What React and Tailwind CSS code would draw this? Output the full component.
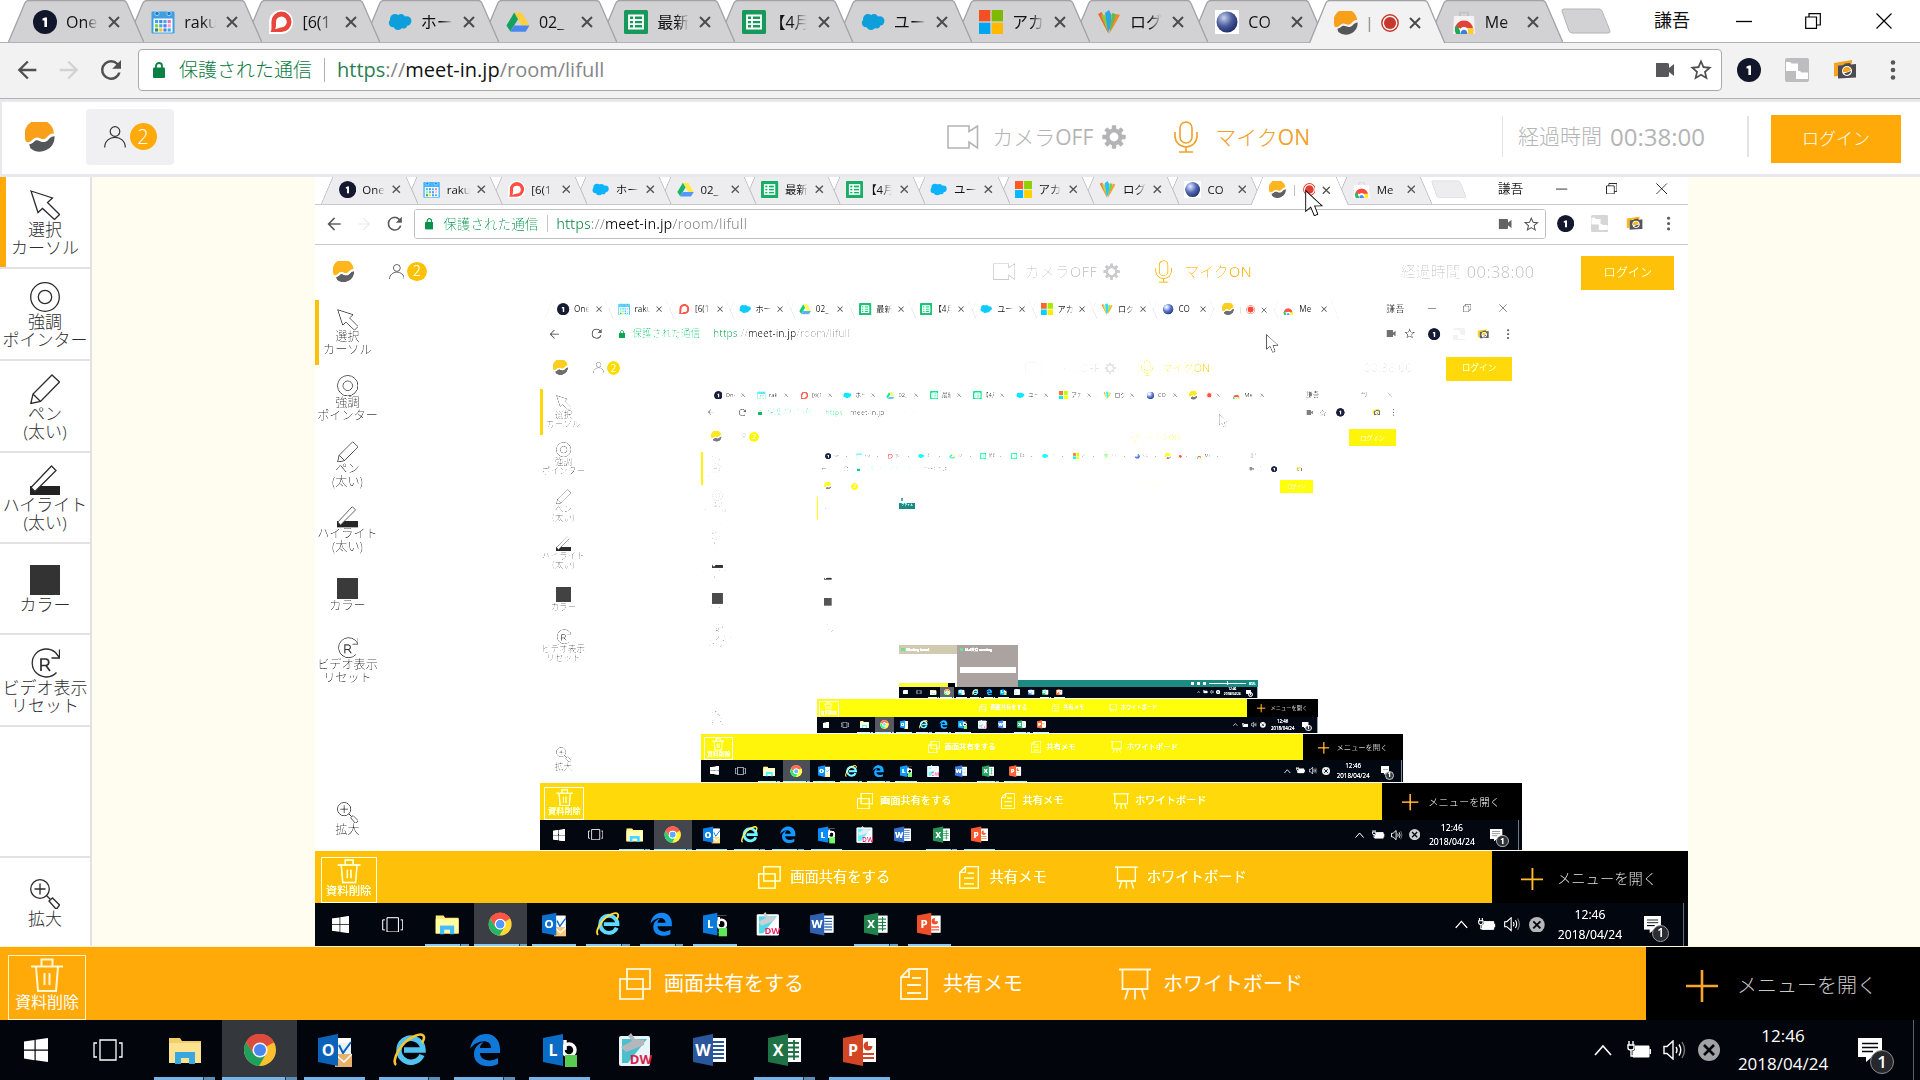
import React from "react";

/* ---------- favicons and brand marks ---------- */

function OneMark() {
  return (
    <svg viewBox="0 0 24 24" className="size-6 shrink-0">
      <circle cx="12" cy="12" r="12" fill="#12162a" />
      <path d="M9.5 8.6 L12 7.6 H14 V17 H11.4 V10.4 H9.5 Z" fill="#fff" />
    </svg>
  );
}

function CalendarMark() {
  const cells = [];
  const colors = ["#3fa7e8", "#4a86e0", "#3fa7e8", "#e46ac0", "#8fcf4a", "#3fa7e8", "#4a86e0", "#f0a0c8", "#2f8f5a", "#f0c020", "#4a86e0", "#3fa7e8"];
  for (let i = 0; i < 12; i++) {
    cells.push(<rect key={i} x={4 + (i % 4) * 4.2} y={10 + Math.floor(i / 4) * 4.2} width="3.2" height="3.2" fill={colors[i]} />);
  }
  return (
    <svg viewBox="0 0 24 24" className="size-6 shrink-0">
      <rect x="0.5" y="1.5" width="23" height="22" rx="1" fill="#3f9fe0" />
      <rect x="2.5" y="8.5" width="19" height="14" fill="#fff" />
      {cells}
      <circle cx="6" cy="3.5" r="2.2" fill="#1f78c8" stroke="#9fd4f8" />
      <circle cx="18" cy="3.5" r="2.2" fill="#1f78c8" stroke="#9fd4f8" />
    </svg>
  );
}

function ChatMark() {
  return (
    <svg viewBox="0 0 24 24" className="size-6 shrink-0">
      <path d="M12 0 A12 12 0 1 1 12 24 H0 V12 A12 12 0 0 1 12 0Z" fill="#fff" />
      <path d="M12.500 1.500 A10 10 0 1 1 12 22 H1.500 C3 20 2.400 16 2.400 12 A10.200 10.200 0 0 1 12.500 1.500Z" fill="#e8453c" />
      <path d="M12.500 6.500 A5.500 5.500 0 1 1 12 17.500 C10 17.500 9 19 6 19 C7.500 17 7 14 7 12 A5.500 5.500 0 0 1 12.500 6.500Z" fill="#fff" />
    </svg>
  );
}

function CloudMark() {
  return (
    <svg viewBox="0 0 24 24" className="size-6 shrink-0">
      <g fill="#0c9fdc">
        <circle cx="7" cy="9" r="5" />
        <circle cx="13" cy="8.5" r="4.4" />
        <circle cx="18.6" cy="11" r="4.8" />
        <circle cx="5" cy="13" r="4.2" />
        <circle cx="10" cy="15.4" r="4.6" />
        <circle cx="15.5" cy="15" r="3.6" />
      </g>
    </svg>
  );
}

function DriveMark() {
  return (
    <svg viewBox="0 0 24 24" className="size-6 shrink-0">
      <path d="M8.2 2.5 H15.8 L23.5 15.5 H15.8 Z" fill="#ffcf3f" />
      <path d="M8.2 2.5 L12 9.2 L4.4 21.5 L0.5 15.5 Z" fill="#12a15f" />
      <path d="M8.2 15.5 H23.5 L19.7 21.8 H4.4 Z" fill="#4a86f0" />
    </svg>
  );
}

function SheetMark() {
  return (
    <svg viewBox="0 0 24 24" className="size-6 shrink-0">
      <rect width="24" height="24" rx="1.5" fill="#16995a" />
      <path d="M5 5.5 H19 V18.5 H5 Z M5 10 H19 M5 14.2 H19 M10 5.5 V18.5" fill="none" stroke="#fff" strokeWidth="1.8" />
    </svg>
  );
}

function WindowsColorMark() {
  return (
    <svg viewBox="0 0 24 24" className="size-6 shrink-0">
      <rect width="11.3" height="11.3" fill="#f25022" />
      <rect x="12.7" width="11.3" height="11.3" fill="#7fba00" />
      <rect y="12.7" width="11.3" height="11.3" fill="#00a4ef" />
      <rect x="12.7" y="12.7" width="11.3" height="11.3" fill="#ffb900" />
    </svg>
  );
}

function FeatherMark() {
  return (
    <svg viewBox="0 0 24 24" className="size-6 shrink-0">
      <path d="M1 4 L4.500 2 L11 14 L11.500 24 Z" fill="#f26a2a" />
      <path d="M4 5 L8 5 L12 16 L11 22 Z" fill="#8fc640" />
      <path d="M8 3 L12 0 L14.500 5 L13.500 18 L11 22 Z" fill="#2aa8e0" />
      <path d="M15 3 L19 4 L18 12 L12.500 23 Z" fill="#68b848" />
      <path d="M19.500 4 L23 5 L18 14 L12 24 Z" fill="#f08a24" />
    </svg>
  );
}

function SphereMark() {
  return (
    <svg viewBox="0 0 24 24" className="size-6 shrink-0">
      <defs>
        <radialGradient id="sphere" cx="0.35" cy="0.3" r="0.8">
          <stop offset="0" stopColor="#c8d2ee" />
          <stop offset="0.5" stopColor="#4a5c9c" />
          <stop offset="1" stopColor="#16225c" />
        </radialGradient>
      </defs>
      <rect width="24" height="24" fill="#fff" />
      <circle cx="12" cy="12" r="10.5" fill="url(#sphere)" />
    </svg>
  );
}

function MeetInMark({ className }) {
  return (
    <svg viewBox="0 0 30 30" className={className}>
      <path d="M0.3 17.5 A14.8 14.8 0 1 1 29 11.5 C26 11 24.4 12.5 22.5 14.5 C20.5 16.8 18.5 18.2 15.5 16.6 C12 14.6 9.5 15.6 7 18.2 C5 20.2 2.5 20.6 0.8 19.6 Z" fill="#f8a01a" />
      <path d="M4.2 22.3 C6 22 7.500 21.200 9 19.800 C11 17.800 12.500 18 15 19.200 C18.500 20.800 21 20.200 23.600 17.400 C25.500 15.400 27 14.400 29.600 14.300 A14.800 14.800 0 0 1 5.400 26.200 Z" fill="#55565a" />
    </svg>
  );
}

function StoreMark() {
  return (
    <svg viewBox="0 0 24 24" className="size-6 shrink-0">
      <path d="M8 6 V2.5 H16 V6" fill="none" stroke="#c0c0c4" strokeWidth="1.6" />
      <path d="M2 6 H22 L23 24 H1 Z" fill="#f2f2f4" />
      <path d="M3 19 A9 8.5 0 0 1 21 19 L18 24 H12 L8 18 Z" fill="#e04338" />
      <path d="M3 17.5 A9 9 0 0 0 4 24 H10 L5 15.5Z" fill="#24a457" />
      <path d="M14 18 H21.5 V24 H12 Z" fill="#fccb30" />
      <circle cx="12" cy="21" r="4" fill="#fff" />
      <path d="M9 24 A3.2 3.2 0 1 1 15 24 Z" fill="#3f7de0" />
    </svg>
  );
}

/* ---------- browser chrome ---------- */

const TABS = [
  { title: "One", icon: <OneMark /> },
  { title: "raku", icon: <CalendarMark /> },
  { title: "[6(1", icon: <ChatMark /> },
  { title: "ホー", icon: <CloudMark /> },
  { title: "02_", icon: <DriveMark /> },
  { title: "最新", icon: <SheetMark /> },
  { title: "【4月", icon: <SheetMark />, tight: true },
  { title: "ユー", icon: <CloudMark /> },
  { title: "アカ", icon: <WindowsColorMark /> },
  { title: "ログ", icon: <FeatherMark /> },
  { title: "CO", icon: <SphereMark /> },
  { title: "|", icon: <MeetInMark className="size-6 shrink-0" />, active: true },
  { title: "Me", icon: <StoreMark /> },
];

function Tab({ tab, index }) {
  const fill = tab.active ? "#f2f2f2" : "#d2d2d4";
  return (
    <div
      className={"relative -ml-[18px] flex min-w-0 flex-1 items-center pt-[2px] pr-6 pl-[25px] first:ml-0 " + (tab.active ? "h-[43px]" : "h-[42px]")}
      style={{ zIndex: tab.active ? 30 : 20 - index }}
    >
      <svg viewBox="0 0 137 42" preserveAspectRatio="none" className="absolute inset-0 -z-10 h-full w-full">
        <path d="M0.5 42 L17 3 Q18 0.5 21 0.5 H116 Q118.500 0.5 119.500 3 L136.500 42" fill={fill} stroke="#a2a2a6" strokeWidth="1.3" />
      </svg>
      {tab.icon}
      {tab.active ? (
        <span className="ml-2 flex min-w-0 flex-1 items-center gap-2">
          <span className="text-[14px] leading-6 text-[#777]">{tab.title}</span>
          <svg viewBox="0 0 18 18" className="size-[18px] shrink-0">
            <circle cx="9" cy="9" r="8.200" fill="none" stroke="#c8372b" strokeWidth="1.4" />
            <circle cx="9" cy="9" r="6" fill="#c8372b" />
          </svg>
        </span>
      ) : (
        <span
          className={
            "shrink-0 overflow-hidden text-[16px] leading-6 whitespace-nowrap text-[#111] [mask-image:linear-gradient(to_right,black_60%,transparent)] " +
            (tab.tight ? "ml-[3px] w-[38px]" : "ml-[9px] w-[32px]")
          }
        >
          {tab.title}
        </span>
      )}
      <button type="button" aria-label="タブを閉じる" className="ml-auto flex size-3 shrink-0 items-center justify-center">
        <svg viewBox="0 0 12 12" className="size-3">
          <path d="M1 1 L11 11 M11 1 L1 11" stroke="#4c4c4e" strokeWidth="2" />
        </svg>
      </button>
    </div>
  );
}

function TabStrip() {
  return (
    <div className="flex h-[42px] bg-white font-normal">
      <div className="isolate z-10 ml-2 flex w-[1555px] min-w-0">
        {TABS.map((t, i) => (
          <Tab key={i} tab={t} index={i} />
        ))}
      </div>
      <button type="button" aria-label="新しいタブ" className="-ml-[2px] h-[38px] w-[50px] shrink-0 pt-[4px]">
        <svg viewBox="0 0 50 26" className="h-[26px] w-[50px]">
          <path d="M1 3 Q0.500 1 3 1 H38 Q40 1 41 3 L49 23 Q49.500 25 47 25 H11 Q9 25 8 23 Z" fill="#d2d2d4" stroke="#b4b4b8" />
        </svg>
      </button>
      <div className="ml-auto flex shrink-0 items-center pb-px text-[18px]">
        <span className="w-9 whitespace-nowrap text-[#111]">謙吾</span>
        <button type="button" aria-label="最小化" className="ml-[46px] flex w-4 justify-center">
          <svg viewBox="0 0 16 16" className="size-4"><path d="M0 8.500 H16" stroke="#000" strokeWidth="1.300" /></svg>
        </button>
        <button type="button" aria-label="元に戻す" className="ml-[53px] flex w-4 justify-center">
          <svg viewBox="0 0 16 16" className="size-4"><path d="M0.700 4 H11.500 V15.300 H0.700 Z M4 4 V0.700 H15.300 V12 H11.500" fill="none" stroke="#000" strokeWidth="1.200" /></svg>
        </button>
        <button type="button" aria-label="閉じる" className="mr-7 ml-[55px] flex w-4 justify-center">
          <svg viewBox="0 0 16 16" className="size-4"><path d="M0.500 0.500 L15.500 15.500 M15.500 0.500 L0.500 15.500" stroke="#000" strokeWidth="1.200" /></svg>
        </button>
      </div>
    </div>
  );
}

function Toolbar({ faint }) {
  return (
    <div className={"flex h-[57px] items-center border-y bg-[#f2f2f2] pb-px " + (faint ? "border-[#f2f2f2]" : "border-[#b2b2b4]")}>
      <button type="button" aria-label="戻る" className="ml-[13px] flex">
        <svg viewBox="0 0 24 24" className="size-7" fill="#505052"><path d="M20 11H7.830l5.590-5.590L12 4l-8 8 8 8 1.410-1.410L7.830 13H20v-2z" /></svg>
      </button>
      <button type="button" aria-label="進む" className="ml-[14px] flex">
        <svg viewBox="0 0 24 24" className="size-7" fill="#d2d2d4"><path d="M12 4l-1.410 1.410L16.170 11H4v2h12.170l-5.580 5.590L12 20l8-8z" /></svg>
      </button>
      <button type="button" aria-label="再読み込み" className="ml-[13px] flex">
        <svg viewBox="0 0 24 24" className="size-[30px]" fill="#505052"><path d="M17.650 6.350A7.950 7.950 0 0 0 12 4a8 8 0 1 0 7.730 10h-2.080A6 6 0 1 1 12 6c1.660 0 3.140.69 4.220 1.780L13 11h7V4z" /></svg>
      </button>
      <div className={"ml-3 flex h-[42px] min-w-0 flex-1 items-center rounded border bg-white " + (faint ? "border-white" : "border-[#a9a9ab]")}>
        <svg viewBox="0 0 12 16" className="ml-[14px] h-4 w-3"><rect y="5.500" width="12" height="10.500" rx="1" fill="#0b8043" /><path d="M3 6 V4 A3 3 0 0 1 9 4 V6" fill="none" stroke="#0b8043" strokeWidth="1.800" /></svg>
        <span className="ml-[14px] text-[19px] whitespace-nowrap text-[#0b7a40]">保護された通信</span>
        <span className={"mx-3 h-6 w-px " + (faint ? "bg-white" : "bg-[#b0b0b2]")} />
        <div role="textbox" aria-label="アドレス" className="flex-1 text-[20px] font-normal whitespace-nowrap text-[#858587]">
          <span className="text-[#2a8050]">https</span>://<span className="text-[#111]">meet-in.jp</span>/room/lifull
        </div>
        <svg viewBox="0 0 20 14" className="mr-[13px] h-[14px] w-5"><path d="M1 0 H12.500 Q14 0 14 1.500 V5 L19 1 V13 L14 9 V12.500 Q14 14 12.500 14 H1 Z" fill="#58585a" /></svg>
        <button type="button" aria-label="ブックマーク" className="mr-[7px] flex">
          <svg viewBox="0 0 24 24" className="size-[26px]" fill="#505052"><path d="M22 9.240l-7.190-.62L12 2 9.190 8.630 2 9.240l5.460 4.730L5.820 21 12 17.270 18.180 21l-1.630-7.030L22 9.240zM12 15.400l-3.760 2.270 1-4.280-3.320-2.880 4.380-.38L12 6.100l1.710 4.040 4.380.38-3.320 2.880 1 4.280L12 15.400z" /></svg>
        </button>
      </div>
      <div className="mr-[15px] ml-[15px] flex shrink-0 items-center gap-6">
        <button type="button" aria-label="1Password" className="flex"><OneMark /></button>
        <button type="button" aria-label="拡張機能" className="flex">
          <svg viewBox="0 0 24 24" className="size-6"><rect width="24" height="24" rx="2" fill="#bdbdbf" /><path d="M1 4 H5 L6.500 5.500 H13 V13 H1 Z M11 13 H15 L16.500 14.500 H23 V21 H11 Z" fill="#fff" /></svg>
        </button>
        <button type="button" aria-label="画面共有の拡張機能" className="flex">
          <svg viewBox="0 0 24 24" className="size-6">
            <path d="M1 5 L19 2 V5.500 L5 7.500 V18 L1 18.500 Z" fill="#f6a21c" />
            <path d="M5 7.500 L10 7 L12 5.500 L17 5 L18 6.500 L23 6 V19.500 L5 20.500 Z" fill="#4c4c50" />
            <circle cx="14" cy="13" r="5" fill="#fff" />
            <path d="M10 14 A4 4 0 1 1 18 12 L14 14 Z" fill="#f6a21c" />
            <path d="M11 15.500 L14 14.500 L18 13 A4 4 0 0 1 11 15.500Z" fill="#4c4c50" />
          </svg>
        </button>
        <button type="button" aria-label="メニュー" className="flex">
          <svg viewBox="0 0 24 24" className="size-6" fill="#58585a"><circle cx="12" cy="4.500" r="2.300" /><circle cx="12" cy="12" r="2.300" /><circle cx="12" cy="19.500" r="2.300" /></svg>
        </button>
      </div>
    </div>
  );
}

/* ---------- meeting header ---------- */

function Gear() {
  return (
    <svg viewBox="0 0 24 24" className="size-6">
      <circle cx="12" cy="12" r="6.400" fill="none" stroke="#b4b4b6" strokeWidth="4" />
      {[0, 45, 90, 135, 180, 225, 270, 315].map((a) => (
        <rect key={a} x="9.800" y="0.300" width="4.400" height="5" rx="0.800" fill="#b4b4b6" transform={`rotate(${a} 12 12)`} />
      ))}
    </svg>
  );
}

function MeetingHeader() {
  return (
    <header className="flex h-[78px] items-center border-t-[3px] border-b-[3px] border-l-2 border-[#e9e9ed] bg-white pb-[3px]">
      <a href="#top" aria-label="meet in" className="ml-[23px] flex"><MeetInMark className="size-[30px]" /></a>
      <button type="button" aria-label="参加者" className="ml-[31px] flex h-14 w-[88px] items-center justify-center gap-1 rounded bg-[#f0f0f2]">
        <svg viewBox="0 0 22 22" className="size-[22px]" fill="none" stroke="#333" strokeWidth="1.200"><circle cx="11" cy="5.500" r="4.800" /><path d="M0.700 21.500 C0.700 8 21.300 8 21.300 21.500" /></svg>
        <span className="flex size-[27px] items-center justify-center rounded-full bg-[#ffaa08] text-[20px] leading-5 text-white">2</span>
      </button>
      <button type="button" className="ml-auto flex items-center text-[21px] leading-7 whitespace-nowrap text-[#b4b4b6]">
        <svg viewBox="0 0 32 24" className="mr-[13px] h-6 w-8" fill="none" stroke="#b4b4b6" strokeWidth="1.600"><path d="M1 1 H22 V6.500 L30.500 1 V23 L22 17 V23 H1 Z" /></svg>
        カメラ<span className="font-normal">OFF</span>
      </button>
      <button type="button" aria-label="設定" className="ml-[9px] flex"><Gear /></button>
      <button type="button" className="ml-12 flex items-center text-[21px] leading-7 whitespace-nowrap text-[#f0a028]">
        <svg viewBox="0 0 24 32" className="mr-[17px] h-8 w-6" fill="none" stroke="#f0a028" strokeWidth="1.600"><rect x="6" y="1" width="12" height="21" rx="6" /><path d="M1 11 V15 A11 11 0 0 0 23 15 V11 M12 26 V31 M5 31 H19" /></svg>
        マイク<span className="font-normal">ON</span>
      </button>
      <div className="ml-[192px] flex h-[41px] w-[247px] items-center gap-2 border-r-2 border-l border-[#e4e4e8] pl-[15px] whitespace-nowrap text-[#b4b4b6]">
        <span className="text-[21px]">経過時間</span>
        <time className="text-[24px] font-normal">00:38:00</time>
      </div>
      <button type="button" className="mt-1 mr-[19px] ml-[22px] h-12 w-[130px] bg-[#ffaa08] text-[17px] text-white">ログイン</button>
    </header>
  );
}

/* ---------- tool sidebar ---------- */

const TOOLS = [
  {
    label: ["選択", "カーソル"],
    active: true,
    icon: <path d="M1 1 L22.500 8 L17.500 12.500 L29.500 24.500 L24.500 29.500 L12.500 18.500 L8 22.500 Z" />,
  },
  {
    label: ["強調", "ポインター"],
    icon: (<><circle cx="15" cy="15" r="14.300" /><circle cx="15" cy="15" r="6.700" /></>),
  },
  {
    label: ["ペン", "(太い)"],
    icon: <path d="M22 1 L29.500 8 L10.500 27.500 L0.800 29.500 L3 20 Z M3 20 L10.500 27.500" />,
  },
  {
    label: ["ハイライト", "(太い)"],
    icon: (<><path d="M0 30 V21 H10 L11 21 H30 V30 Z" fill="#222" stroke="none" /><path d="M21.500 1 L26 5.500 L5 26.500 L1 22.500 Z" fill="#fff" /></>),
  },
  { label: ["カラー"], icon: <rect width="30" height="30" fill="#333" stroke="none" /> },
  {
    label: ["ビデオ表示", "リセット"],
    icon: (<><path d="M26.500 24.500 A14 14 0 1 1 25.500 4.500 L29 9 M29.500 1.500 V10 H21.500" /><path d="M11 23 V11 H16 A3.300 3.300 0 0 1 16 17.500 H11 M16 17.500 L20 23" strokeWidth="1.700" /></>),
  },
];

const ZOOM_TOOL = {
  label: ["拡大"],
  icon: (<><circle cx="10" cy="10" r="9.300" /><path d="M10 4.500 V15.500 M4.500 10 H15.500 M16.500 16.500 L20.500 20.500 M19 22 L22.500 19 L29.500 26 L27 29.500 L25.500 29.500 Z" /></>),
};

function ToolButton({ tool }) {
  return (
    <button
      type="button"
      className={"flex flex-col items-center justify-center pt-[2px] text-[17px] leading-[18px] text-[#2c2c2e] " + (tool.active ? "border-l-[6px] border-[#ffaa08] pr-[6px]" : "")}
    >
      <svg viewBox="0 0 30 30" className="mb-px size-[30px]" fill="none" stroke="#2c2c2e" strokeWidth="1.300">{tool.icon}</svg>
      {tool.label.map((l) => (
        <span key={l} className="whitespace-nowrap">{l}</span>
      ))}
    </button>
  );
}

function Sidebar() {
  return (
    <nav className="grid w-[92px] shrink-0 grid-rows-[repeat(3,90px)_repeat(2,89px)_90px_1fr_88px] gap-[2px] border-r-2 border-[#e2e2e4] bg-[#e2e2e4] *:bg-white">
      {TOOLS.map((t) => (
        <ToolButton key={t.label[0]} tool={t} />
      ))}
      <div />
      <ToolButton tool={ZOOM_TOOL} />
    </nav>
  );
}

/* ---------- bottom bar ---------- */

function BottomBar() {
  return (
    <footer className="flex h-[74px] shrink-0 border-t border-[#fdf6cf] bg-[#ffaa08] text-[20px] font-normal text-white">
      <button type="button" className="mt-2 ml-2 flex h-[65px] w-[78px] flex-col items-center border border-[#fff4c8] pt-[2px]">
        <svg viewBox="0 0 34 34" className="h-[34px] w-[34px]" fill="none" stroke="#fff6d8" strokeWidth="2"><path d="M1 8.500 H33 M11.500 8.500 V1.500 H22.500 V8.500 M6 9 L8 33 H26 L28 9 M14.500 15 V27 M19.500 15 V27" /></svg>
        <span className="text-[16px] leading-5 whitespace-nowrap">資料削除</span>
      </button>
      <div className="flex flex-1 items-center">
        <button type="button" className="ml-auto flex items-center whitespace-nowrap">
          <svg viewBox="0 0 32 32" className="mr-[13px] size-8" fill="none" stroke="#fff6d8" strokeWidth="1.800"><rect x="8" y="1" width="23" height="20" /><rect x="1" y="11" width="23" height="20" /></svg>
          画面共有をする
        </button>
        <button type="button" className="ml-[96px] flex items-center whitespace-nowrap">
          <svg viewBox="0 0 28 32" className="mr-[15px] h-8 w-7" fill="none" stroke="#fff6d8" strokeWidth="1.800"><path d="M9 1 H27 V31 H1 V9 Z M9 1 V9 H1 M12 10 H21 M7 17 H21 M7 25 H21" /></svg>
          共有メモ
        </button>
        <button type="button" className="mr-[343px] ml-[96px] flex items-center whitespace-nowrap">
          <svg viewBox="0 0 32 32" className="mr-[12px] size-8" fill="none" stroke="#fff6d8" strokeWidth="1.800"><path d="M0 1.500 H32 M3.500 1.500 V21 H28.500 V1.500 M9 22 L6 31.500 M16 22 V31.500 M23 22 L26 31.500" /></svg>
          ホワイトボード
        </button>
      </div>
      <button type="button" className="flex w-[274px] items-center bg-black pt-[5px] pl-[40px] font-light whitespace-nowrap text-[#c8c8c8]">
        <svg viewBox="0 0 32 32" className="mr-[19px] size-8"><path d="M0 16 H32 M16 0 V32" stroke="#f8a62a" strokeWidth="2.600" /></svg>
        メニューを開く
      </button>
    </footer>
  );
}

/* ---------- windows taskbar ---------- */

function OfficeMark({ letter, color, children }) {
  return (
    <svg viewBox="0 0 34 34" className="size-[34px]">
      <rect x="14" y="5" width="19" height="24" fill="#fff" />
      {children}
      <path d="M0 5 L20 1 V33 L0 29 Z" fill={color} />
      <text x="10" y="23" textAnchor="middle" fontSize="16" fontWeight="700" fill="#fff" fontFamily="Open Sans, sans-serif">{letter}</text>
    </svg>
  );
}

function ChromeMark() {
  return (
    <svg viewBox="0 0 34 34" className="size-[34px]">
      <circle cx="17" cy="17" r="16" fill="#fbc02d" />
      <path d="M17 17 L3.100 9 A16 16 0 0 1 31 9.200 Z" fill="#dd4b3e" />
      <path d="M3.100 9 A16 16 0 0 0 16 33 L23 21 L10 20 Z" fill="#1fa15d" />
      <path d="M17 9.200 H31 A16 16 0 0 0 3.100 9 L10 20.500 Z" fill="#dd4b3e" />
      <circle cx="17" cy="17" r="7.600" fill="#f4f4f4" />
      <circle cx="17" cy="17" r="6" fill="#4a86f0" />
    </svg>
  );
}

const APPS = [
  { name: "スタート", icon: <svg viewBox="0 0 24 24" className="size-6" fill="#fff"><path d="M0 3.500 L10.500 2 V11.500 H0 Z M11.700 1.800 L24 0 V11.500 H11.700 Z M0 12.700 H10.500 V22.200 L0 20.600 Z M11.700 12.700 H24 V24 L11.700 22.300 Z" /></svg> },
  { name: "タスクビュー", icon: <svg viewBox="0 0 30 22" className="h-[22px] w-[30px]" fill="none" stroke="#fff" strokeWidth="1.300"><path d="M7 1 H23 V21 H7 Z M4 4 H1 V18 H4 M26 4 H29 V18 H26" /></svg> },
  { name: "エクスプローラー", open: 2, icon: <svg viewBox="0 0 34 34" className="size-[34px]"><path d="M1 5 H12 L14 8 H33 V30 H1 Z" fill="#f3cf6a" /><path d="M1 10 H33 V30 H1 Z" fill="#fde391" /><path d="M7 31 V19 H27 V31 H21 V25 H13 V31 Z" fill="#3aa8e0" /></svg> },
  { name: "Chrome", open: 2, active: true, icon: <ChromeMark /> },
  { name: "Outlook", open: 1, icon: <OfficeMark letter="O" color="#0a63b8"><path d="M16 10 H33 V26 H16 Z" fill="#e8f2fc" /><path d="M21 12 L25 20 L33 9" fill="none" stroke="#0a63b8" strokeWidth="2" /><path d="M17 21 H34 V34 H17 Z" fill="#e8b068" /><path d="M17 21 L26 29 L34 21" fill="none" stroke="#fff" strokeWidth="1.500" /></OfficeMark> },
  { name: "Internet Explorer", open: 2, icon: <svg viewBox="0 0 34 34" className="size-[34px]"><path d="M29 22 A12 12 0 1 1 30 17 H11" fill="none" stroke="#52c3f0" strokeWidth="5.500" /><path d="M3 32 C-2 28 8 8 22 3 C31 -1 33 4 29 10" fill="none" stroke="#f8c430" strokeWidth="2.600" /></svg> },
  { name: "Edge", open: 2, icon: <svg viewBox="0 0 34 34" className="size-[34px]"><path d="M2 16 C4 5 11 1 18 1 C28 1 32 9 32 16 V20 H12 C12 27 22 30 30 25 V31 C20 36 6 33 6 21 C6 14 11 10 16 9 C13 11 12 13 12 15 H23 C23 5 8 7 2 16 Z" fill="#0f78d8" /></svg> },
  { name: "Lync", open: 1, icon: <OfficeMark letter="L" color="#0a6cc4"><rect x="14" y="5" width="20" height="24" fill="#03050a" /><path d="M22 7 V17" stroke="#fff" strokeWidth="3.500" /><circle cx="26" cy="17" r="6" fill="none" stroke="#fff" strokeWidth="3.500" /><rect x="22" y="22" width="12" height="12" fill="#56cc50" /></OfficeMark> },
  { name: "DocuWorks", icon: <svg viewBox="0 0 34 34" className="size-[34px]"><rect x="1" y="3" width="31" height="30" rx="2" fill="#e8f4f6" /><path d="M4 6 H29 L10 30 H4 Z" fill="#4cbfcf" /><path d="M3 14 L14 8 L10 3 L13 0 L17 6 L26 7 V12 L8 19 Z" fill="#b4b8bc" /><text x="34" y="31" textAnchor="end" fontSize="13" fontWeight="700" fill="#d81e50" fontFamily="Open Sans, sans-serif">DW</text></svg> },
  { name: "Word", icon: <OfficeMark letter="W" color="#2a569c"><path d="M20 9 H31 M20 13 H31 M20 17 H31 M20 21 H31 M20 25 H31" stroke="#2a569c" strokeWidth="1.800" /></OfficeMark> },
  { name: "Excel", open: 2, icon: <OfficeMark letter="X" color="#1f7245"><path d="M20 10 H31 M20 14.500 H31 M20 19 H31 M20 23.500 H31 M26 7 V27" stroke="#1f7245" strokeWidth="1.800" /></OfficeMark> },
  { name: "PowerPoint", open: 1, icon: <OfficeMark letter="P" color="#d24625"><path d="M20 21 H31 M20 25 H31" stroke="#d24625" strokeWidth="1.800" /><circle cx="25" cy="13" r="4.500" fill="#d24625" /><path d="M25 13 V8 A5 5 0 0 1 30 13 Z" fill="#fff" /></OfficeMark> },
];

function Taskbar() {
  return (
    <div className="flex h-[60px] shrink-0 bg-[#02050c] text-[17px] font-normal text-white">
      <div className="flex">
        {APPS.map((a, i) => (
          <button
            key={a.name}
            type="button"
            aria-label={a.name}
            className={"relative flex items-center justify-center " + (i < 2 ? "w-[72px] " : "w-[75px] ") + (i === 2 ? "ml-[3px] " : "") + (a.active ? "bg-[#34373c]" : "")}
          >
            {a.icon}
            {a.open && (
              <span className={"absolute bottom-0 flex h-[3px] bg-[#76b4e8] " + (a.active ? "inset-x-0" : "inset-x-[7px]")}>
                {a.open === 2 && <span className="ml-auto w-[12px] border-l border-[#1c3048] bg-[#5c8fb8]" />}
              </span>
            )}
          </button>
        ))}
      </div>
      <div className="ml-auto flex items-center">
        <svg viewBox="0 0 18 12" className="h-3 w-[18px]"><path d="M1 11 L9 2 L17 11" fill="none" stroke="#fff" strokeWidth="1.600" /></svg>
        <svg viewBox="0 0 24 18" className="ml-[15px] h-[18px] w-6"><path d="M6 5 H22 V16 H6 Z" fill="#fff" stroke="#fff" /><path d="M22.500 8 H24 V13 H22.500 Z" fill="#fff" /><path d="M0 3 H8 V8 Q8 10 4 10 Q0 10 0 8 Z" fill="#02050c" /><path d="M1 4 H7 V7 Q7 9 4 9 Q1 9 1 7 Z M2 4 V0 M6 4 V0 M4 9 V15 H7" fill="none" stroke="#fff" strokeWidth="1.400" /></svg>
        <svg viewBox="0 0 24 20" className="ml-3 h-5 w-6" fill="none" stroke="#fff" strokeWidth="1.400"><path d="M1 6.500 H4 L10 1 V19 L4 13.500 H1 Z M13 7 Q15 10 13 13 M16 4.500 Q19.500 10 16 15.500" /><path d="M19 2 Q24 10 19 18" stroke="#777" /></svg>
        <svg viewBox="0 0 22 22" className="ml-[11px] size-[22px]"><circle cx="11" cy="11" r="11" fill="#a0a2a4" /><path d="M6 6 L16 16 M16 6 L6 16" stroke="#02050c" strokeWidth="2.600" /></svg>
        <time className="ml-[14px] flex w-[98px] flex-col items-center leading-7 whitespace-nowrap"><span>12:46</span><span>2018/04/24</span></time>
        <div className="relative ml-[26px] size-6">
          <svg viewBox="0 0 24 24" className="size-6"><path d="M0 0 H24 V19 H14 L8 24 V19 H0 Z" fill="#fff" /><path d="M4 5.500 H20 M4 9.500 H20 M4 13.500 H15" stroke="#02050c" strokeWidth="1.500" /></svg>
          <span className="absolute top-3 left-3 flex size-6 items-center justify-center rounded-full border border-[#8a8c90] bg-[#26282c] text-[17px] leading-5 font-semibold">1</span>
        </div>
        <span className="mr-[6px] ml-[31px] h-[60px] w-px bg-[#5c6068]" />
      </div>
    </div>
  );
}

/* ---------- the shared screen ---------- */

function Pointer() {
  return (
    <svg viewBox="0 0 25 37" className="h-[37px] w-[25px]">
      <path d="M1 1 V30 L8 24 L13 36 L18 34 L13.500 22.500 L23.500 22 Z" fill="#fff" stroke="#111" strokeWidth="1.500" />
    </svg>
  );
}

function SpreadsheetScreen() {
  return (
    <div className="flex h-full flex-col bg-white">
      <div className="mt-3 ml-3 h-4 w-3 bg-[#2a6058]" />
      <div className="mt-2 flex h-8 w-[88px] items-center justify-center bg-[#0f4b47] text-[16px] whitespace-nowrap text-white">ファイル</div>
      <div className="mt-auto flex items-end">
        <div className="h-[222px] w-[312px] bg-white">
          <div className="flex h-[48px] items-center gap-2 bg-[#706e60] px-3 text-[18px] font-normal whitespace-nowrap text-white">
            <span className="size-5 bg-[#3a7a50]" />Meeting board
          </div>
          <div className="mt-[154px] flex h-5 w-[300px] bg-[#8a8a1c]"><span className="ml-auto w-9 bg-black" /></div>
        </div>
        <div className="flex h-[222px] w-[326px] flex-col bg-[#5c5857]">
          <div className="flex h-[48px] items-center gap-2 px-3 text-[18px] font-normal whitespace-nowrap text-white">
            <span className="size-5 bg-[#3a7a50]" />lifull共有 meeting
          </div>
          <div className="mx-3 mt-[70px] h-8 bg-white" />
        </div>
        <div className="flex h-9 flex-1 items-center justify-end gap-4 bg-[#0f4b47] pr-3 text-[18px] text-white">
          <span className="size-4 bg-white" />
          <span className="size-4 bg-white" />
          <span className="size-4 bg-white" />
          <span className="flex h-[3px] w-[200px] items-center justify-center bg-white"><span className="h-5 w-2 bg-white" /></span>
          <span>85%</span>
        </div>
      </div>
      <Taskbar />
    </div>
  );
}

const POINTER_SPOTS = [null, "top-[22px] left-[1385px]", "top-[70px] left-[1419px]", "top-[73px] left-[1417px]", null];
const LAST_DEPTH = 5;

/* Each level shows the same desktop again, smaller and washed out a little more. */
function SharedScreen({ depth }) {
  return (
    <div inert className="relative isolate h-[1080px] w-[1920px] shrink-0 overflow-hidden bg-white brightness-113 [zoom:0.715]">
      {depth === LAST_DEPTH ? <SpreadsheetScreen /> : <Desktop depth={depth} />}
      {POINTER_SPOTS[depth] && (
        <div className={"absolute z-50 " + POINTER_SPOTS[depth]}><Pointer /></div>
      )}
    </div>
  );
}

function Desktop({ depth }) {
  return (
    <div className={"flex flex-col overflow-hidden bg-white " + (depth === 0 ? "h-screen" : "h-full")}>
      <TabStrip />
      <Toolbar faint={depth > 1} />
      <MeetingHeader />
      <div className="flex min-h-0 flex-1">
        <Sidebar />
        <main className="flex min-w-0 flex-1 items-end justify-center overflow-hidden bg-[#fffdf0] pr-[9px]">
          <SharedScreen depth={depth + 1} />
        </main>
      </div>
      <BottomBar />
      <Taskbar />
    </div>
  );
}

export default function App() {
  return (
    <div className="font-light [font-family:'Open_Sans','Noto_Sans_CJK_JP',sans-serif]">
      <Desktop depth={0} />
    </div>
  );
}
